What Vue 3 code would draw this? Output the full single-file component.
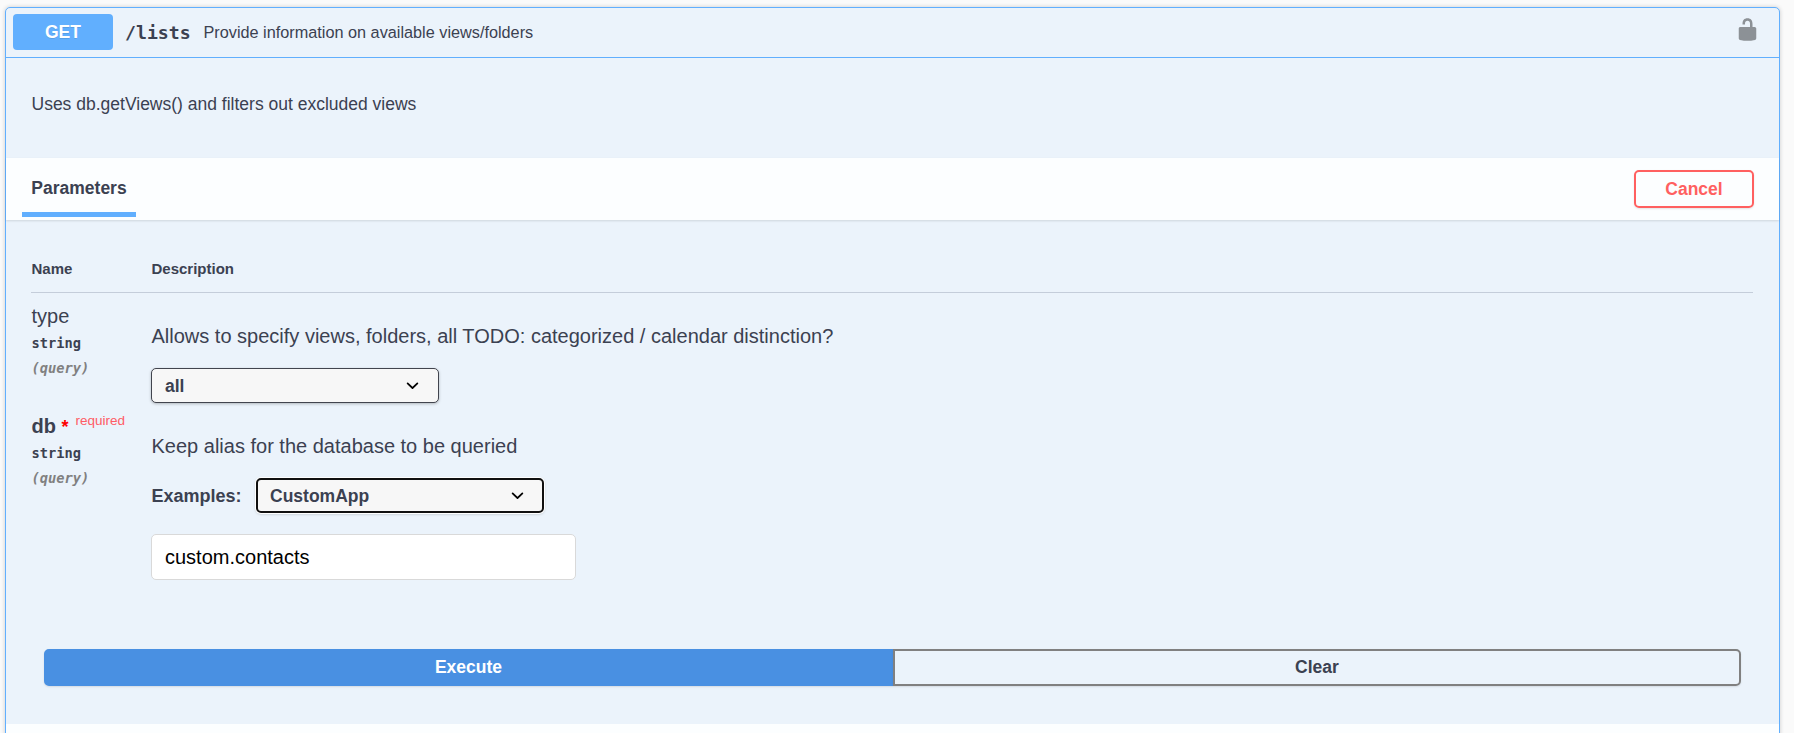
<script setup>
import { ref } from 'vue'

const dbValue = ref('custom.contacts')
const chevron =
  'M13.418 7.859a.695.695 0 01.978 0 .68.68 0 010 .969l-3.908 3.83a.697.697 0 01-.979 0l-3.908-3.83a.68.68 0 010-.969.695.695 0 01.978 0L10 11l3.418-3.141z'
</script>

<template>
  <main class="page">
    <section class="opblock">
      <header class="summary">
        <span class="method">GET</span>
        <span class="path">/lists</span>
        <span class="brief">Provide information on available views/folders</span>
        <svg class="lock" viewBox="0 0 20 20" aria-hidden="true">
          <path d="M15.8 8H14V5.6C14 2.703 12.665 1 10 1 7.334 1 6 2.703 6 5.6V6h2v-.801C8 3.754 8.797 3 10 3c1.203 0 2 .754 2 2.199V8H4c-.553 0-1 .646-1 1.199V17c0 .549.428 1.139.951 1.307l1.197.387C5.672 18.861 6.55 19 7.1 19h5.8c.549 0 1.428-.139 1.951-.307l1.196-.387c.524-.167.953-.757.953-1.306V9.199C17 8.646 16.352 8 15.8 8z" />
        </svg>
      </header>

      <p class="intro">Uses db.getViews() and filters out excluded views</p>

      <div class="section-head">
        <h4 class="tab">Parameters</h4>
        <button class="btn cancel">Cancel</button>
      </div>

      <div class="params">
        <div class="row head">
          <span>Name</span>
          <span>Description</span>
        </div>

        <div class="row first">
          <div class="name-col">
            <div class="name">type</div>
            <div class="kind">string</div>
            <div class="where">(query)</div>
          </div>
          <div class="desc-col">
            <p class="desc">Allows to specify views, folders, all TODO: categorized / calendar distinction?</p>
            <button class="select">
              all
              <svg viewBox="0 0 20 20"><path :d="chevron" /></svg>
            </button>
          </div>
        </div>

        <div class="row second">
          <div class="name-col">
            <div class="name required">db<span class="star">*</span><span class="req">required</span></div>
            <div class="kind">string</div>
            <div class="where">(query)</div>
          </div>
          <div class="desc-col">
            <p class="desc">Keep alias for the database to be queried</p>
            <div class="examples">
              <span class="label">Examples:</span>
              <button class="select focused">
                CustomApp
                <svg viewBox="0 0 20 20"><path :d="chevron" /></svg>
              </button>
            </div>
            <input v-model="dbValue" class="field" type="text" />
          </div>
        </div>
      </div>

      <div class="actions">
        <button class="btn execute">Execute</button>
        <button class="btn clear">Clear</button>
      </div>

      <div class="next-head"></div>
    </section>
  </main>
</template>

<style>
body {
  background: #fafafa;
  overflow: hidden;
}
</style>

<style scoped>
* {
  box-sizing: border-box;
  margin: 0;
}
.page {
  height: 733px;
  padding: 7px 14px 0 5px;
  overflow: hidden;
  font-family: "Liberation Sans", Arial, sans-serif;
  color: #3b4151;
}
button,
input {
  font-family: inherit;
}
.opblock {
  height: 780px;
  border: 1px solid #61affe;
  border-radius: 5px;
  background: #ebf3fb;
  box-shadow: 0 0 4px rgba(0, 0, 0, 0.19);
}
.summary {
  display: flex;
  align-items: center;
  height: 50px;
  padding: 0 19px 1px 7px;
  border-bottom: 1px solid #61affe;
}
.method {
  width: 100px;
  height: 36px;
  border-radius: 4px;
  background: #61affe;
  color: #fff;
  font-size: 17.5px;
  font-weight: 700;
  line-height: 36px;
  text-align: center;
  text-shadow: 0 1px 0 rgba(0, 0, 0, 0.1);
}
.path {
  width: 77px;
  margin-left: 12px;
  font-family: "DejaVu Sans Mono", monospace;
  font-size: 18.2px;
  font-weight: 700;
}
.brief {
  flex: 1;
  padding-left: 1.5px;
  font-size: 16.25px;
}
.lock {
  width: 25px;
  height: 25px;
  margin-top: -5px;
  opacity: 0.4;
}
.intro {
  height: 100px;
  padding-left: 25.5px;
  font-size: 17.5px;
  line-height: 92px;
}
.section-head {
  display: flex;
  justify-content: space-between;
  height: 62px;
  padding: 0 25px 0 16px;
  background: rgba(255, 255, 255, 0.85);
  box-shadow: 0 1px 2px rgba(0, 0, 0, 0.12);
}
.tab {
  width: 114px;
  height: 59px;
  border-bottom: 5px solid #61affe;
  font-size: 17.5px;
  line-height: 61px;
  text-align: center;
}
.btn {
  border: 2px solid gray;
  border-radius: 5px;
  background: transparent;
  color: #3b4151;
  font-size: 17.5px;
  font-weight: 700;
  text-align: center;
  box-shadow: 0 1px 2px rgba(0, 0, 0, 0.1);
}
.cancel {
  width: 120px;
  height: 38px;
  margin-top: 12px;
  border-color: #ff6060;
  color: #ff6060;
}
.params {
  padding: 0 26px 0 25px;
}
.row {
  display: grid;
  grid-template-columns: 120px 1fr;
}
.head {
  height: 73px;
  border-bottom: 1px solid #c4cdda;
  font-size: 15px;
  font-weight: 700;
  line-height: 98px;
}
.head span {
  padding-left: 0.5px;
}
.first {
  height: 110px;
}
.second {
  height: 246px;
}
.name-col {
  padding: 11px 0 0 0.5px;
}
.name {
  display: flex;
  height: 25px;
  font-size: 20px;
  line-height: 25px;
}
.required {
  font-weight: 700;
}
.star {
  margin-left: 5.5px;
  color: #f00;
  font-size: 18px;
  line-height: 27px;
}
.req {
  margin-left: 7px;
  color: #ff5c64;
  font-size: 13.5px;
  font-weight: 400;
  line-height: 14px;
}
.kind,
.where {
  height: 25px;
  font-family: "DejaVu Sans Mono", monospace;
  font-size: 13.7px;
  font-weight: 700;
  line-height: 28px;
}
.where {
  color: gray;
  font-style: italic;
}
.desc-col {
  padding-top: 31px;
}
.desc {
  height: 44px;
  padding-left: 0.5px;
  font-size: 20px;
  line-height: 25px;
}
.select {
  display: flex;
  align-items: center;
  justify-content: space-between;
  width: 288px;
  height: 35px;
  padding: 1px 13.5px 0 13px;
  border: 1px solid #41444e;
  border-radius: 5px;
  background: #f7f7f7;
  color: #3b4151;
  font-size: 17.5px;
  font-weight: 700;
  box-shadow: 0 1px 3px rgba(0, 0, 0, 0.25);
}
.select svg {
  width: 25px;
  height: 25px;
  margin-top: -1px;
}
.focused {
  padding: 1px 12.5px 0 12px;
  border: 2px solid #101010;
  box-shadow: 0 0 0 1px #fff, 0 1px 3px rgba(0, 0, 0, 0.25);
}
.examples {
  display: flex;
  align-items: center;
  height: 35px;
}
.label {
  width: 105px;
  padding: 1px 0 0 0.5px;
  font-size: 18px;
  font-weight: 700;
}
.field {
  display: block;
  width: 425px;
  height: 46px;
  margin-top: 21px;
  padding: 0 13px;
  border: 1px solid #d9d9d9;
  border-radius: 5px;
  outline: none;
  background: #fff;
  color: #000;
  font-size: 20px;
}
.actions {
  display: flex;
  height: 75px;
  padding: 0 38px;
}
.actions .btn {
  flex: 1;
  height: 37px;
  padding-bottom: 1px;
}
.actions .execute {
  flex: 0 0 849px;
  border-color: #4990e2;
  border-radius: 5px 0 0 5px;
  background: #4990e2;
  color: #fff;
}
.actions .clear {
  border-radius: 0 5px 5px 0;
}
.next-head {
  height: 62px;
  background: rgba(255, 255, 255, 0.85);
}
</style>
